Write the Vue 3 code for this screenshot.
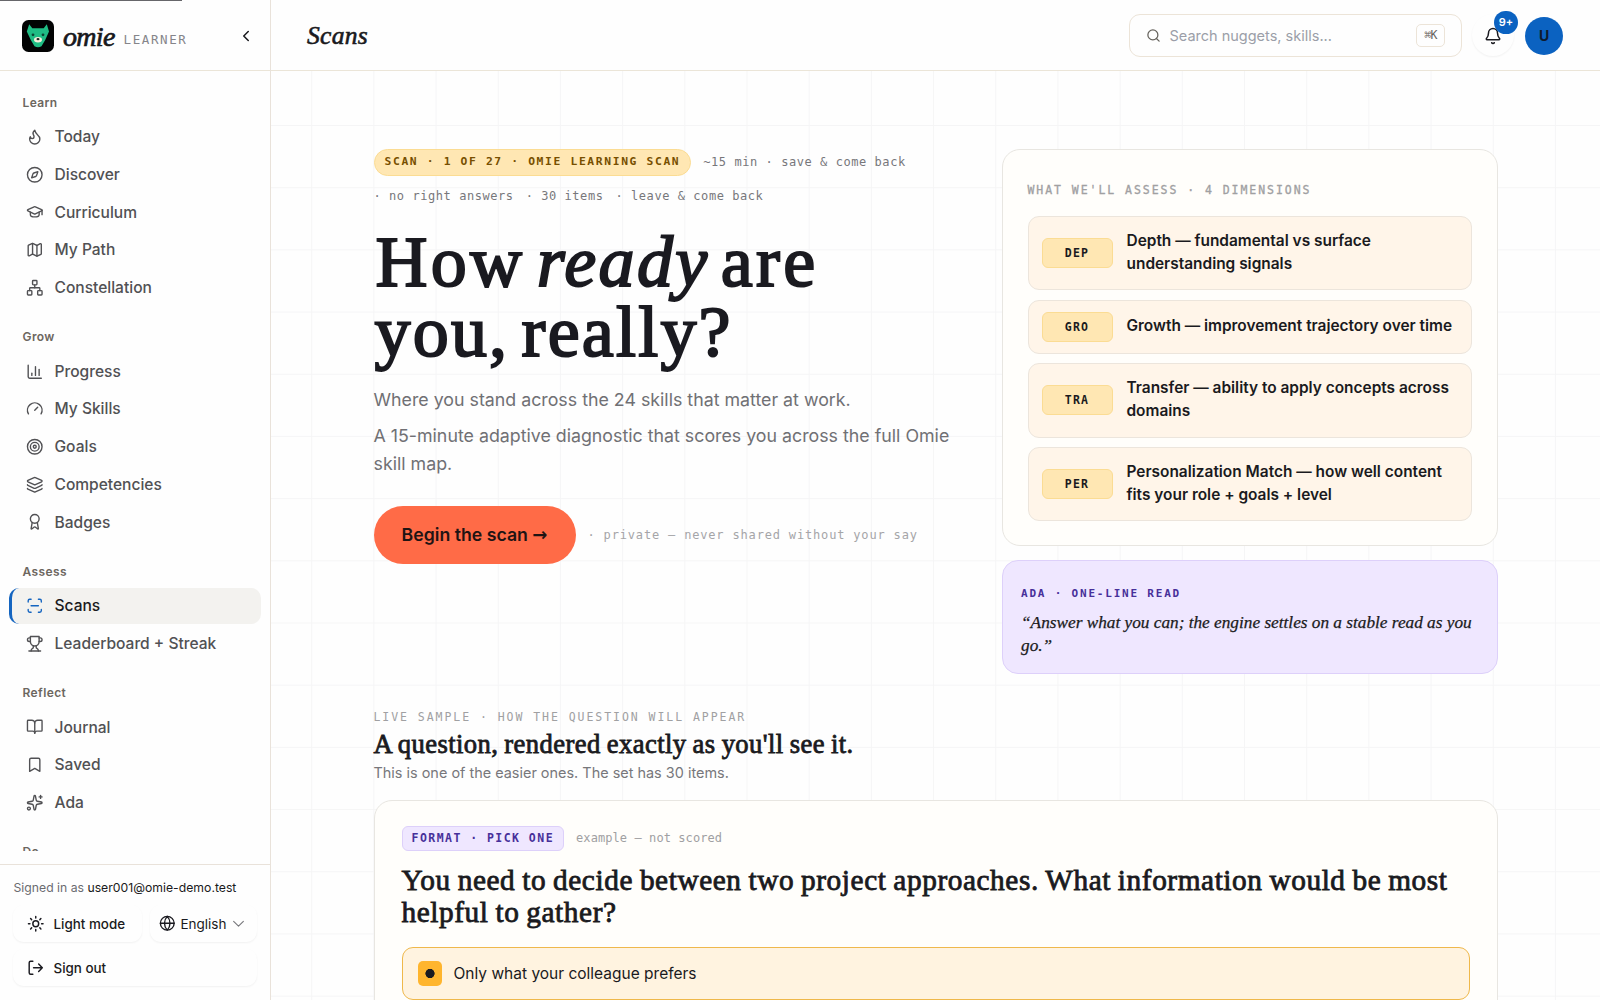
<script setup>
const sections = [
  {
    label: 'Learn',
    items: [
      { name: 'Today', icon: '<path d="M8.5 14.5A2.5 2.5 0 0 0 11 12c0-1.38-.5-2-1-3-1.072-2.143-.224-4.054 2-6 .5 2.5 2 4.9 4 6.5 2 1.6 3 3.5 3 5.5a7 7 0 1 1-14 0c0-1.153.433-2.294 1-3a2.5 2.5 0 0 0 2.500 2.5z"/>' },
      { name: 'Discover', icon: '<circle cx="12" cy="12" r="10"/><path d="m16.24 7.76-1.804 5.411a2 2 0 0 1-1.265 1.265L7.760 16.240l1.804-5.411a2 2 0 0 1 1.265-1.265z"/>' },
      { name: 'Curriculum', icon: '<path d="M21.420 10.922a1 1 0 0 0-.019-1.838L12.830 5.180a2 2 0 0 0-1.660 0L2.600 9.080a1 1 0 0 0 0 1.832l8.570 3.908a2 2 0 0 0 1.660 0z"/><path d="M22 10v6"/><path d="M6 12.500V16a6 3 0 0 0 12 0v-3.500"/>' },
      { name: 'My Path', icon: '<path d="M14.106 5.553a2 2 0 0 0 1.788 0l3.659-1.830A1 1 0 0 1 21 4.619v12.764a1 1 0 0 1-.553.894l-4.553 2.277a2 2 0 0 1-1.788 0l-4.212-2.106a2 2 0 0 0-1.788 0l-3.659 1.830A1 1 0 0 1 3 19.381V6.618a1 1 0 0 1 .553-.894l4.553-2.277a2 2 0 0 1 1.788 0z"/><path d="M15 5.764v15"/><path d="M9 3.236v15"/>' },
      { name: 'Constellation', icon: '<rect x="16" y="16" width="6" height="6" rx="1"/><rect x="2" y="16" width="6" height="6" rx="1"/><rect x="9" y="2" width="6" height="6" rx="1"/><path d="M5 16v-3a1 1 0 0 1 1-1h12a1 1 0 0 1 1 1v3"/><path d="M12 12V8"/>' },
    ],
  },
  {
    label: 'Grow',
    items: [
      { name: 'Progress', icon: '<path d="M3 3v16a2 2 0 0 0 2 2h16"/><path d="M18 17V9"/><path d="M13 17V5"/><path d="M8 17v-3"/>' },
      { name: 'My Skills', icon: '<path d="m12 14 4-4"/><path d="M3.340 19a10 10 0 1 1 17.320 0"/>' },
      { name: 'Goals', icon: '<circle cx="12" cy="12" r="10"/><circle cx="12" cy="12" r="6"/><circle cx="12" cy="12" r="2"/>' },
      { name: 'Competencies', icon: '<path d="M12.830 2.180a2 2 0 0 0-1.660 0L2.600 6.080a1 1 0 0 0 0 1.830l8.580 3.910a2 2 0 0 0 1.660 0l8.580-3.900a1 1 0 0 0 0-1.830z"/><path d="M2 12a1 1 0 0 0 .580.910l8.600 3.910a2 2 0 0 0 1.650 0l8.580-3.900A1 1 0 0 0 22 12"/><path d="M2 17a1 1 0 0 0 .580.910l8.600 3.910a2 2 0 0 0 1.650 0l8.580-3.900A1 1 0 0 0 22 17"/>' },
      { name: 'Badges', icon: '<path d="m15.477 12.890 1.515 8.526a.5.5 0 0 1-.810.470l-3.580-2.687a1 1 0 0 0-1.197 0l-3.586 2.686a.5.5 0 0 1-.810-.469l1.514-8.526"/><circle cx="12" cy="8" r="6"/>' },
    ],
  },
  {
    label: 'Assess',
    items: [
      { name: 'Scans', active: true, icon: '<path d="M3 7V5a2 2 0 0 1 2-2h2"/><path d="M17 3h2a2 2 0 0 1 2 2v2"/><path d="M21 17v2a2 2 0 0 1-2 2h-2"/><path d="M7 21H5a2 2 0 0 1-2-2v-2"/><path d="M7 12h10"/>' },
      { name: 'Leaderboard + Streak', icon: '<path d="M6 9H4.500a2.500 2.500 0 0 1 0-5H6"/><path d="M18 9h1.500a2.500 2.500 0 0 0 0-5H18"/><path d="M4 22h16"/><path d="M10 14.660V17c0 .550-.470.980-.970 1.210C7.850 18.750 7 20.240 7 22"/><path d="M14 14.660V17c0 .550.470.980.970 1.210C16.150 18.750 17 20.240 17 22"/><path d="M18 2H6v7a6 6 0 0 0 12 0V2Z"/>' },
    ],
  },
  {
    label: 'Reflect',
    items: [
      { name: 'Journal', icon: '<path d="M12 7v14"/><path d="M3 18a1 1 0 0 1-1-1V4a1 1 0 0 1 1-1h5a4 4 0 0 1 4 4 4 4 0 0 1 4-4h5a1 1 0 0 1 1 1v13a1 1 0 0 1-1 1h-6a3 3 0 0 0-3 3 3 3 0 0 0-3-3z"/>' },
      { name: 'Saved', icon: '<path d="m19 21-7-4-7 4V5a2 2 0 0 1 2-2h10a2 2 0 0 1 2 2z"/>' },
      { name: 'Ada', icon: '<path d="M11.017 2.814a1 1 0 0 1 1.966 0l1.051 5.558a2 2 0 0 0 1.594 1.594l5.558 1.051a1 1 0 0 1 0 1.966l-5.558 1.051a2 2 0 0 0-1.594 1.594l-1.051 5.558a1 1 0 0 1-1.966 0l-1.051-5.558a2 2 0 0 0-1.594-1.594l-5.558-1.051a1 1 0 0 1 0-1.966l5.558-1.051a2 2 0 0 0 1.594-1.594z"/><path d="M20 2v4"/><path d="M22 4h-4"/><circle cx="4" cy="20" r="2"/>' },
    ],
  },
  { label: 'Do', items: [] },
]

const dimensions = [
  { code: 'DEP', text: 'Depth — fundamental vs surface understanding signals' },
  { code: 'GRO', text: 'Growth — improvement trajectory over time' },
  { code: 'TRA', text: 'Transfer — ability to apply concepts across domains' },
  { code: 'PER', text: 'Personalization Match — how well content fits your role + goals + level' },
]
</script>

<template>
  <div class="app">
    <div class="loading-bar"></div>
    <aside class="sidebar">
      <div class="brand">
        <svg class="logo" viewBox="0 0 32 32">
          <rect width="32" height="32" rx="6.500" fill="#020303" />
          <path d="M7.200 4.300 10.300 8.300h11.400l3.100-4 2.200 7.200-3.800 8.500-3.700 6.200q-3.500 2-7 0L8.800 20 4.800 11.500z" fill="#1fbd84" />
          <circle cx="11" cy="14.800" r="1.400" fill="#0c4434" />
          <circle cx="21" cy="14.800" r="1.400" fill="#0c4434" />
          <ellipse cx="16" cy="19.700" rx="4" ry="2.700" fill="#f5f1dc" />
          <ellipse cx="16" cy="19.200" rx="1.500" ry="1.100" fill="#222" />
        </svg>
        <span class="wordmark">omie</span>
        <span class="role">LEARNER</span>
        <svg class="collapse icon" viewBox="0 0 24 24"><path d="m15 18-6-6 6-6" /></svg>
      </div>

      <nav class="nav">
        <section v-for="s in sections" :key="s.label" class="nav-section">
          <h4 class="nav-label">{{ s.label }}</h4>
          <a v-for="i in s.items" :key="i.name" class="nav-item" :class="{ active: i.active }">
            <svg class="icon" viewBox="0 0 24 24" v-html="i.icon"></svg>
            <span>{{ i.name }}</span>
          </a>
        </section>
      </nav>

      <div class="account">
        <p class="signed">Signed in as <b>user001@omie-demo.test</b></p>
        <div class="account-row">
          <button class="ghost theme">
            <svg class="icon" viewBox="0 0 24 24"><circle cx="12" cy="12" r="4" /><path d="M12 2v2M12 20v2M4.930 4.930l1.410 1.410M17.660 17.660l1.410 1.410M2 12h2M20 12h2M6.340 17.660l-1.410 1.410M19.070 4.930l-1.410 1.410" /></svg>
            <span>Light mode</span>
          </button>
          <button class="ghost lang">
            <svg class="icon" viewBox="0 0 24 24"><circle cx="12" cy="12" r="10" /><path d="M12 2a14.500 14.500 0 0 0 0 20 14.500 14.500 0 0 0 0-20M2 12h20" /></svg>
            <span>English</span>
            <svg class="icon caret" viewBox="0 0 24 24"><path d="m3 8 9 9 9-9" /></svg>
          </button>
        </div>
        <button class="ghost signout">
          <svg class="icon" viewBox="0 0 24 24"><path d="M8 21H5a2 2 0 0 1-2-2V5a2 2 0 0 1 2-2h3M16 17l5-5-5-5M21 12H9" /></svg>
          <span>Sign out</span>
        </button>
      </div>
    </aside>

    <div class="page">
      <header class="topbar">
        <h2 class="page-title">Scans</h2>
        <div class="search">
          <svg class="icon" viewBox="0 0 24 24"><circle cx="11" cy="11" r="8" /><path d="m21 21-4.300-4.300" /></svg>
          <span class="placeholder">Search nuggets, skills...</span>
          <kbd>⌘K</kbd>
        </div>
        <div class="bell">
          <svg class="icon" viewBox="0 0 24 24"><path d="M10.268 21a2 2 0 0 0 3.464 0" /><path d="M3.262 15.326A1 1 0 0 0 4 17h16a1 1 0 0 0 .740-1.673C19.410 13.956 18 12.499 18 8A6 6 0 0 0 6 8c0 4.499-1.411 5.956-2.738 7.326" /></svg>
          <span class="count">9+</span>
        </div>
        <div class="avatar">U</div>
      </header>

      <main class="canvas">
        <div class="hero">
          <div class="intro">
            <div class="meta">
              <span class="pill">SCAN · 1 OF 27 · OMIE LEARNING SCAN</span>
              <span>~15 min · save &amp; come back</span>
              <span>· no right answers</span>
              <span>· 30 items</span>
              <span>· leave &amp; come back</span>
            </div>
            <h1><span class="h1-first">How <em>ready</em> are</span><br /><span class="h1-second">you, really?</span></h1>
            <p class="lead">Where you stand across the 24 skills that matter at work.</p>
            <p class="lead">A 15-minute adaptive diagnostic that scores you across the full Omie skill map.</p>
            <div class="cta">
              <button class="begin">Begin the scan <span class="arrow">→</span></button>
              <span class="private">· private — never shared without your say</span>
            </div>
          </div>

          <div class="side">
            <section class="assess">
              <h3 class="eyebrow strong">WHAT WE'LL ASSESS · 4 DIMENSIONS</h3>
              <div v-for="d in dimensions" :key="d.code" class="dimension">
                <span class="code">{{ d.code }}</span>
                <p>{{ d.text }}</p>
              </div>
            </section>
            <section class="ada">
              <h3>ADA · ONE-LINE READ</h3>
              <p>“Answer what you can; the engine settles on a stable read as you go.”</p>
            </section>
          </div>
        </div>

        <section class="sample">
          <h3 class="eyebrow">LIVE SAMPLE · HOW THE QUESTION WILL APPEAR</h3>
          <h2>A question, rendered exactly as you'll see it.</h2>
          <p class="sub">This is one of the easier ones. The set has 30 items.</p>
          <div class="question">
            <div class="format">
              <span class="chip">FORMAT · PICK ONE</span>
              <span class="note">example — not scored</span>
            </div>
            <h3>You need to decide between two project approaches. What information would be most helpful to gather?</h3>
            <div class="option">
              <span class="radio"></span>
              <span>Only what your colleague prefers</span>
            </div>
          </div>
        </section>
      </main>
    </div>
  </div>
</template>

<style>
html, body { margin: 0; height: 100%; overflow: hidden; background: #fefefe; }
</style>

<style scoped>
.app {
  --serif: "Liberation Serif", serif;
  --mono: "DejaVu Sans Mono", monospace;
  position: relative;
  display: flex;
  width: 1600px;
  height: 1000px;
  overflow: hidden;
  font-family: Inter, sans-serif;
  color: #1a1a20;
  background: #fefefe;
}
.app * { box-sizing: border-box; }
h1, h2, h3, h4, p { margin: 0; font-weight: 400; }
button { font: inherit; color: inherit; border: 0; background: none; padding: 0; margin: 0; }
.icon { fill: none; stroke: currentColor; stroke-width: 2; stroke-linecap: round; stroke-linejoin: round; flex: none; }
.loading-bar { position: absolute; z-index: 5; left: 0; top: 0; width: 182px; height: 1px; background: #66666a; }

.sidebar { width: 271px; flex: none; display: flex; flex-direction: column; border-right: 1px solid #e9e2da; background: #fefefe; }
.brand { height: 71px; flex: none; display: flex; align-items: center; padding: 0 15px 0 22px; border-bottom: 1px solid #ebe5d8; }
.logo { width: 32px; height: 32px; margin-top: 1px; }
.wordmark { font: italic 400 28px/32px var(--serif); letter-spacing: -.700px; -webkit-text-stroke: .7px currentColor; margin: 3px 0 0 9px; width: 52px; color: #17181c; }
.role { font: 400 12.500px/16px var(--mono); letter-spacing: 1.600px; color: #85858a; margin: 10px 0 0 8.500px; }
.collapse { width: 18px; height: 18px; margin: 1px 0 0 auto; color: #17181c; }

.nav { flex: none; height: 780px; overflow: hidden; padding: 0 9px; }
.nav-section { display: flex; flex-direction: column; gap: 2px; }
.nav-label { font-size: 12px; line-height: 18px; font-weight: 600; letter-spacing: .4px; color: #6c665f; padding-left: 13.500px; margin: 23px 0 5px; }
.nav-item { height: 35.700px; display: flex; align-items: center; gap: 11px; padding-left: 17px; border-radius: 10px; font-size: 15.550px; font-weight: 500; color: #515154; }
.nav-item .icon { width: 17.500px; height: 17.500px; stroke-width: 1.900; }
.nav-item.active { background: #f3f2ef; color: #1a1a20; border-left: 3px solid #1565c0; padding-left: 14px; }
.nav-item.active .icon { color: #1565c0; }

.account { border-top: 1px solid #e9e2da; margin-top: 13px; padding: 13px 13px 0; height: 136px; }
.signed { font-size: 12.220px; line-height: 20px; color: #6b6b70; white-space: nowrap; padding-left: .5px; }
.signed b { font-weight: 400; color: #1a1a20; }
.account-row { display: flex; gap: 8px; margin-top: 7px; }
.ghost { height: 37px; display: flex; align-items: center; border-radius: 11px; font-size: 13.400px; font-weight: 500; box-shadow: 0 1px 2px rgba(40, 40, 40, .06); }
.ghost .icon { width: 17.500px; height: 17.500px; }
.theme { width: 130px; padding-left: 14px; gap: 9px; }
.lang { width: 107px; padding-left: 9px; gap: 4.500px; font-weight: 400; font-size: 13.500px; }
.ghost.lang .icon { width: 16.500px; height: 16.500px; }
.ghost.lang .caret { width: 13px; height: 13px; color: #77777b; margin-left: 1.500px; }
.signout { width: 244px; padding-left: 14px; gap: 9px; margin-top: 7px; }

.page { flex: 1; min-width: 0; display: flex; flex-direction: column; }
.topbar { height: 71px; flex: none; display: flex; align-items: center; padding: 0 37px 0 36px; border-bottom: 1px solid #ebe5d8; background: #fefefe; }
.page-title { font: italic 400 25.500px/30px var(--serif); letter-spacing: .3px; margin-top: 2px; -webkit-text-stroke: .6px currentColor; }
.search { width: 333px; height: 43px; margin-left: auto; display: flex; align-items: center; padding: 0 16px; border: 1px solid #ece4d8; border-radius: 11px; }
.search .icon { width: 15px; height: 15px; color: #65625c; }
.placeholder { font-size: 14.500px; color: #9b9ea8; margin-left: 8.500px; }
kbd { margin-left: auto; width: 29px; height: 23px; border: 1px solid #ece4d8; border-radius: 5px; font: 400 11.500px/21px var(--mono); letter-spacing: -.6px; text-align: center; color: #65625c; }
.bell { position: relative; width: 42px; height: 42px; margin-left: 10px; border-radius: 50%; display: flex; align-items: center; justify-content: center; box-shadow: 0 1px 2px rgba(40, 40, 40, .06); }
.bell .icon { width: 18px; height: 18px; margin-top: 1px; }
.count { position: absolute; left: 22px; top: -3px; width: 24px; height: 23px; border-radius: 12px; background: #0b62c1; color: #fff; font-size: 11px; line-height: 23px; font-weight: 600; text-align: center; }
.avatar { width: 38px; height: 38px; margin: 1px 0 0 11px; border-radius: 50%; background: #0b62c1; color: #0e1a2e; font-size: 14px; font-weight: 700; line-height: 38px; text-align: center; }

.canvas {
  flex: 1;
  min-height: 0;
  overflow: hidden;
  padding: 78px 102.500px 0;
  background-image: linear-gradient(90deg, #f5f5f6 1px, transparent 1px), linear-gradient(#f5f5f6 1px, transparent 1px);
  background-size: 62.200px 62.200px;
  background-position: 40.200px 54px;
}
.hero { display: grid; grid-template-columns: 1fr 495.500px; column-gap: 48px; }
.meta { display: flex; flex-wrap: wrap; gap: 11px 12px; align-items: center; font: 400 12px/18px var(--mono); letter-spacing: .560px; color: #77777b; }
.pill { height: 26.500px; padding: 0 10px; border: 1px solid #fbdc93; border-radius: 14px; background: #ffe7b3; color: #774f00; font-weight: 700; font-size: 11.300px; line-height: 23.500px; letter-spacing: 1.650px; white-space: nowrap; }
h1 { font: 400 72px/70.700px var(--serif); color: #1a1a20; margin-top: 22px; white-space: nowrap; -webkit-text-stroke: 2px currentColor; }
.h1-first { letter-spacing: 3.300px; word-spacing: -10px; margin-left: 2px; }
.h1-first em { letter-spacing: 2.300px; }
.h1-second { letter-spacing: 2.200px; word-spacing: -8px; margin-left: 1px; }
.lead { font-size: 17.800px; line-height: 27.700px; color: #707074; margin-top: 8px; }
h1 + .lead { margin-top: 18.500px; }
.cta { display: flex; align-items: center; gap: 12px; margin-top: 28px; }
.begin { width: 202px; height: 58.500px; border-radius: 30px; background: #ff6b47; color: #1f1414; font-size: 17.700px; font-weight: 600; white-space: nowrap; }
.arrow { font-family: "DejaVu Sans", sans-serif; font-weight: 700; font-size: 18px; line-height: 1; }
.private { font: 400 12px/18px var(--mono); letter-spacing: .830px; color: #a5a5a8; white-space: nowrap; }

.side { display: flex; flex-direction: column; gap: 14px; }
.assess { height: 397px; padding: 30px 24.500px 0; border: 1px solid #e8e6e1; border-radius: 18px; background: #fffefb; display: flex; flex-direction: column; gap: 9.300px; }
.eyebrow { font: 400 11.500px/20px var(--mono); letter-spacing: 1.950px; color: #a0a0a2; white-space: nowrap; }
.eyebrow.strong { -webkit-text-stroke: .3px currentColor; margin-bottom: 6.500px; }
.dimension { display: flex; align-items: center; gap: 14px; padding: 11px 12px 11px 13px; border: 1px solid #ece5dc; border-radius: 11px; background: #fff5e9; }
.code { width: 71px; height: 30px; flex: none; border: 1px solid #fbdc93; border-radius: 6px; background: #ffe7b3; font: 700 11.500px/28px var(--mono); letter-spacing: 1.200px; text-align: center; }
.dimension p { font-size: 15.430px; line-height: 23.500px; font-weight: 600; padding: 1px 0 2.600px; }
.ada { height: 114px; padding: 23.500px 18px 0; border: 1px solid #ddd0fa; border-radius: 16px; background: #efe7ff; }
.ada h3 { font: 700 11px/18px var(--mono); letter-spacing: 1.800px; color: #47309a; }
.ada p { font: italic 400 17.250px/23.700px var(--serif); margin-top: 8px; -webkit-text-stroke: .25px currentColor; }

.sample { margin-top: 33px; }
.sample h2 { font: 400 26.600px/32px var(--serif); letter-spacing: .420px; word-spacing: -1px; padding-top: 1px; -webkit-text-stroke: .8px currentColor; white-space: nowrap; }
.sub { font-size: 14.450px; line-height: 22px; color: #77777b; margin-top: 2px; }
.question { margin-top: 16px; height: 300px; padding: 24.500px 27px; border: 1px solid #e8e6e1; border-radius: 18px; background: #fffefb; }
.format { display: flex; align-items: center; gap: 12px; }
.chip { height: 25.500px; padding: 0 9px; border: 1px solid #ddd0fa; border-radius: 6px; background: #efe7ff; color: #47309a; font: 700 11.500px/23.500px var(--mono); letter-spacing: 1.460px; }
.note { font: 400 12px/18px var(--mono); letter-spacing: .080px; color: #a0a0a2; }
.question h3 { font: 400 29.300px/32px var(--serif); letter-spacing: .580px; word-spacing: -1px; -webkit-text-stroke: .8px currentColor; margin-top: 13px; }
.option { margin-top: 18.500px; height: 53.500px; display: flex; align-items: center; gap: 11.500px; padding: 0 15px; border: 1.500px solid #efb84b; border-radius: 11px; background: #fff3e0; font-size: 15.500px; }
.radio { width: 24.500px; height: 24.500px; border-radius: 5px; background: radial-gradient(circle, #1a1a20 4.300px, #ffb52e 4.900px); }
</style>
